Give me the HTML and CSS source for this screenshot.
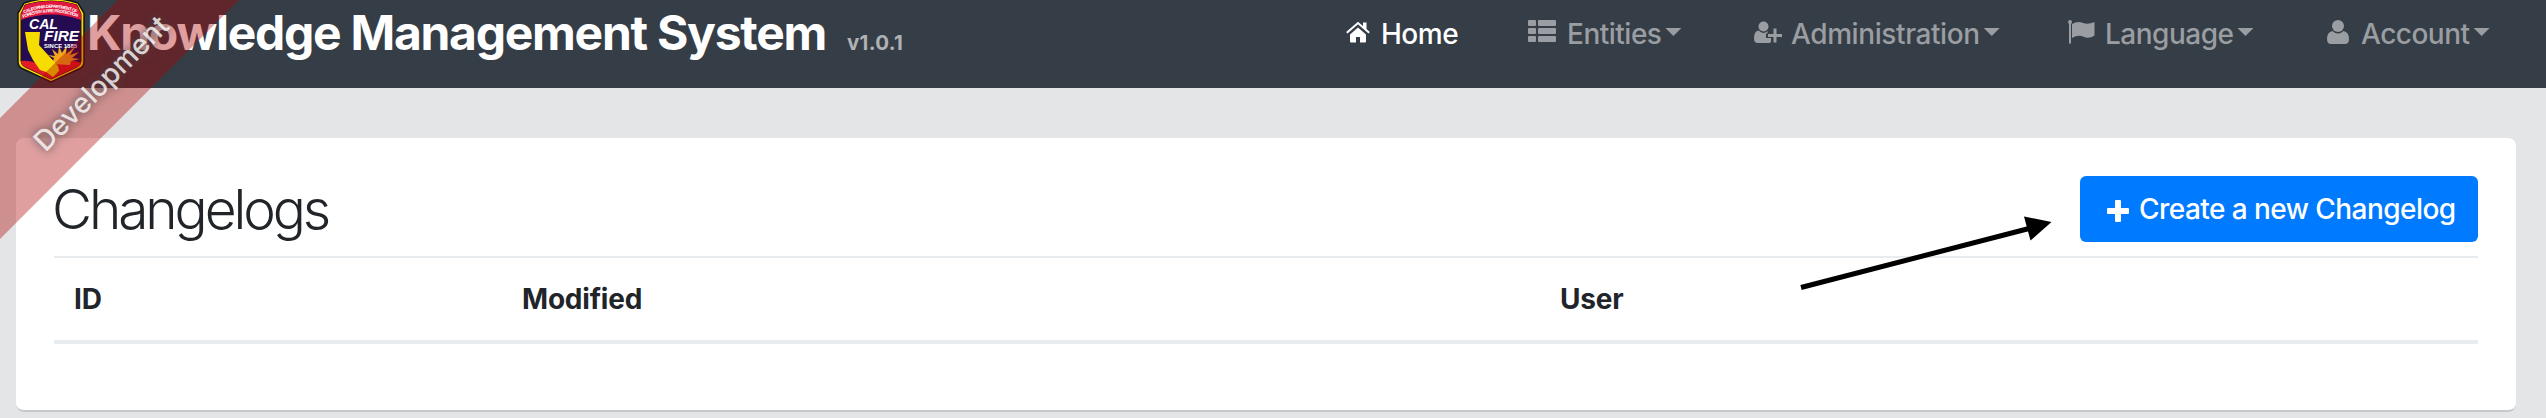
FILE: index.html
```html
<!DOCTYPE html>
<html lang="en">
<head>
<meta charset="utf-8">
<title>Knowledge Management System</title>
<link rel="stylesheet" href="styles.css">
</head>
<body>
<nav class="navbar">
  <svg class="logo" viewBox="0 0 70 84">
    <path d="M8 3Q35-6 62 3L68 13V62Q68 67 63 69L35 82L7 69Q2 67 2 62V13Z" fill="#f6dc00" stroke="#17131c" stroke-width="1.5"/>
    <path d="M9 5Q35-3 61 5L65 14V61Q65 65 61 67L35 79L9 67Q5 65 5 61V14Z" fill="#240b52" stroke="#241719"/>
    <path d="M9 5Q35-3 61 5L65 14V20Q35 9 5 20V14Z" fill="#e3173e"/>
    <path id="arc1" d="M8 13.5Q35 2 62 13.5" fill="none"/>
    <path id="arc2" d="M7 18Q35 6.500 64 18" fill="none"/>
    <text class="logo-arc"><textPath href="#arc1" textLength="54">CALIFORNIA DEPARTMENT OF</textPath></text>
    <text class="logo-arc"><textPath href="#arc2" textLength="56">FORESTRY &amp; FIRE PROTECTION</textPath></text>
    <path d="M5 61Q14 60 25 65Q35 58 45 61Q56 59 65 63Q64 66 61 67L35 79L9 67Q5 65 5 61Z" fill="#e21b25"/>
    <path d="M36 64L38 58L32 55L39 56L36 49L42 54L43 46L46 53L51 45L50 54L59 47L54 55L63 52L56 58L64 59L55 61L54 65Z" fill="#f3a51b"/>
    <path d="M9 32H24L23 45L42 66L43 71L37 77L30 72L24 70L17 60L12 50Z" fill="#f6dc00"/>
    <text class="logo-name" x="13" y="29" textLength="29" lengthAdjust="spacingAndGlyphs">CAL</text>
    <text class="logo-name" x="28" y="41" textLength="35" lengthAdjust="spacingAndGlyphs">FIRE</text>
    <text class="logo-since" x="28" y="48" textLength="33" lengthAdjust="spacingAndGlyphs">SINCE 1885</text>
  </svg>
  <span class="brand">Knowledge Management System</span>
  <span class="version">v1.0.1</span>
  <ul class="menu">
    <li class="item home active"><svg class="icon" width="24" height="24" viewBox="0 0 24 24"><path d="M4 14.500L12 7.500L20 14.500V21.500Q20 22.500 19 22.500H14V17H10V22.500H5Q4 22.500 4 21.500Z"/><path d="M.8 12.800L12 3L23.200 12.800" fill="none" stroke="currentColor" stroke-width="2"/><path d="M17 2.500H20.500V10L17 7Z"/></svg><span class="label">Home</span></li>
    <li class="item entities"><svg class="icon" width="28" height="24" viewBox="0 0 28 24"><rect width="8" height="6" rx="1"/><rect x="10" width="18" height="6" rx="1"/><rect y="8" width="8" height="6" rx="1"/><rect x="10" y="8" width="18" height="6" rx="1"/><rect y="16" width="8" height="6" rx="1"/><rect x="10" y="16" width="18" height="6" rx="1"/></svg><span class="label">Entities</span><i class="caret"></i></li>
    <li class="item admin"><svg class="icon" width="28" height="24" viewBox="0 0 28 24"><circle cx="9.500" cy="6.500" r="5"/><path d="M4.500 10.500Q9.500 15 13.500 11V13.500H12V18H17V22Q16 23 15 23H4Q0 23 0 18.500Q0 11 4.500 10.500Z"/><path d="M19.500 8.500H22.500V14H28V17H22.500V22.500H19.500V17H14V14H19.500Z"/></svg><span class="label">Administration</span><i class="caret"></i></li>
    <li class="item language"><svg class="icon" width="28" height="24" viewBox="0 0 28 24"><path d="M1 3H3V23.500H1Z"/><circle cx="2" cy="2" r="2"/><path d="M4 4Q10 .5 15 3Q20 5 26.500 2V15.500Q21 19.500 15 16.500Q10 14.500 4 18Z"/></svg><span class="label">Language</span><i class="caret"></i></li>
    <li class="item account"><svg class="icon" width="24" height="24" viewBox="0 0 24 24"><circle cx="12" cy="6" r="6"/><path d="M6.500 11Q12 16 17.500 11Q23 12 23 19Q23 24 19 24H5Q1 24 1 19Q1 12 6.500 11Z"/></svg><span class="label">Account</span><i class="caret"></i></li>
  </ul>
</nav>
<main class="card">
  <header class="heading">
    <h2 class="title">Changelogs</h2>
    <button class="create"><svg class="plus" width="22" height="22" viewBox="0 0 22 22"><path d="M9 0H13Q14 0 14 1V8H21Q22 8 22 9V13Q22 14 21 14H14V21Q14 22 13 22H9Q8 22 8 21V14H1Q0 14 0 13V9Q0 8 1 8H8V1Q8 0 9 0Z"/></svg><span class="create-label">Create a new Changelog</span></button>
  </header>
  <div class="columns"><span class="col">ID</span><span class="col">Modified</span><span class="col">User</span></div>
</main>
<div class="ribbon"><span class="ribbon-text">Development</span></div>
<svg class="arrow" viewBox="0 0 260 80"><path d="M2 71.500L232 12" stroke="#000" stroke-width="5"/><path d="M225 .5L252.500 6L231.500 24.500Z"/></svg>
</body>
</html>
```
FILE: styles.css
```css
* { box-sizing: border-box; }
body { margin: 0; height: 418px; overflow: hidden; background: #e4e5e6; color: #212529; font: 28px/42px Inter, "Liberation Sans", sans-serif; position: relative; }
.navbar { display: flex; height: 88px; background: #353d47; color: #9a9da1; font-weight: 450; }
.logo { width: 70px; height: 84px; margin-left: 16px; flex: none; }
.logo-arc { font: bold 4.5px "Liberation Sans", sans-serif; fill: #fff; }
.logo-name { font: italic bold 14px "Liberation Sans", sans-serif; fill: #fff; }
.logo-since { font: bold 5.5px "Liberation Sans", sans-serif; fill: #fff; }
.brand { width: 761px; padding: 3px 0 0 1px; color: #fff; font-size: 48px; line-height: 60px; font-weight: 700; letter-spacing: -1.27px; white-space: nowrap; }
.version { padding-top: 23px; color: #aeb1b5; font-size: 20.5px; line-height: 40px; font-weight: 700; letter-spacing: .3px; }
.menu { display: flex; margin: 0 56px 0 auto; padding: 13px 0 0; list-style: none; }
.item { display: flex; height: 42px; white-space: nowrap; }
.active { color: #fff; }
.icon { margin-top: 7px; fill: currentColor; flex: none; }
.label { padding-left: 11px; letter-spacing: -.5px; }
.caret { margin: 15px 0 0 4px; width: 16px; height: 8px; background: currentColor; clip-path: polygon(0 0, 100% 0, 50% 100%); }
.home { width: 182px; }
.entities { width: 226px; }
.admin { width: 314px; }
.admin .label { padding-left: 9px; letter-spacing: -.4px; }
.language { width: 258px; }
.language .label { padding-left: 9px; }
.account { width: 164px; }
.card { margin: 50px 30px 0 16px; height: 274px; padding: 38px; background: #fff; border-radius: 8px; border-bottom: 2px solid #c6c8ca; }
.heading { display: flex; justify-content: space-between; height: 80px; }
.title { margin: -1px 0 0 -2px; font-size: 55px; font-weight: 330; line-height: 68px; letter-spacing: -3.1px; }
.create { display: flex; align-items: center; width: 398px; height: 66px; padding: 0 0 0 27px; border: 0; border-radius: 6px; background: #007bff; color: #fff; font: inherit; font-weight: 450; white-space: nowrap; }
.plus { fill: currentColor; margin-top: 4px; }
.create-label { padding-left: 10px; letter-spacing: -.55px; }
.columns { display: grid; grid-template-columns: 448px 1038px 1fr; height: 88px; padding: 20px 20px 0; border-top: 2px solid #e9ecef; border-bottom: 4px solid #e9ecef; font-weight: 700; letter-spacing: -.2px; }
.ribbon { position: absolute; left: 0; top: 0; width: 239px; height: 239px; background: rgba(170, 0, 0, .375); clip-path: polygon(118px 0, 239px 0, 0 239px, 0 118px); }
.ribbon-text { position: absolute; left: 0; top: 62px; width: 202px; text-align: center; font-weight: 450; color: rgba(255, 255, 255, .8); text-shadow: 0 0 8px #444; transform: rotate(-45deg); }
.arrow { position: absolute; left: 1799px; top: 216px; width: 260px; height: 80px; }
```
